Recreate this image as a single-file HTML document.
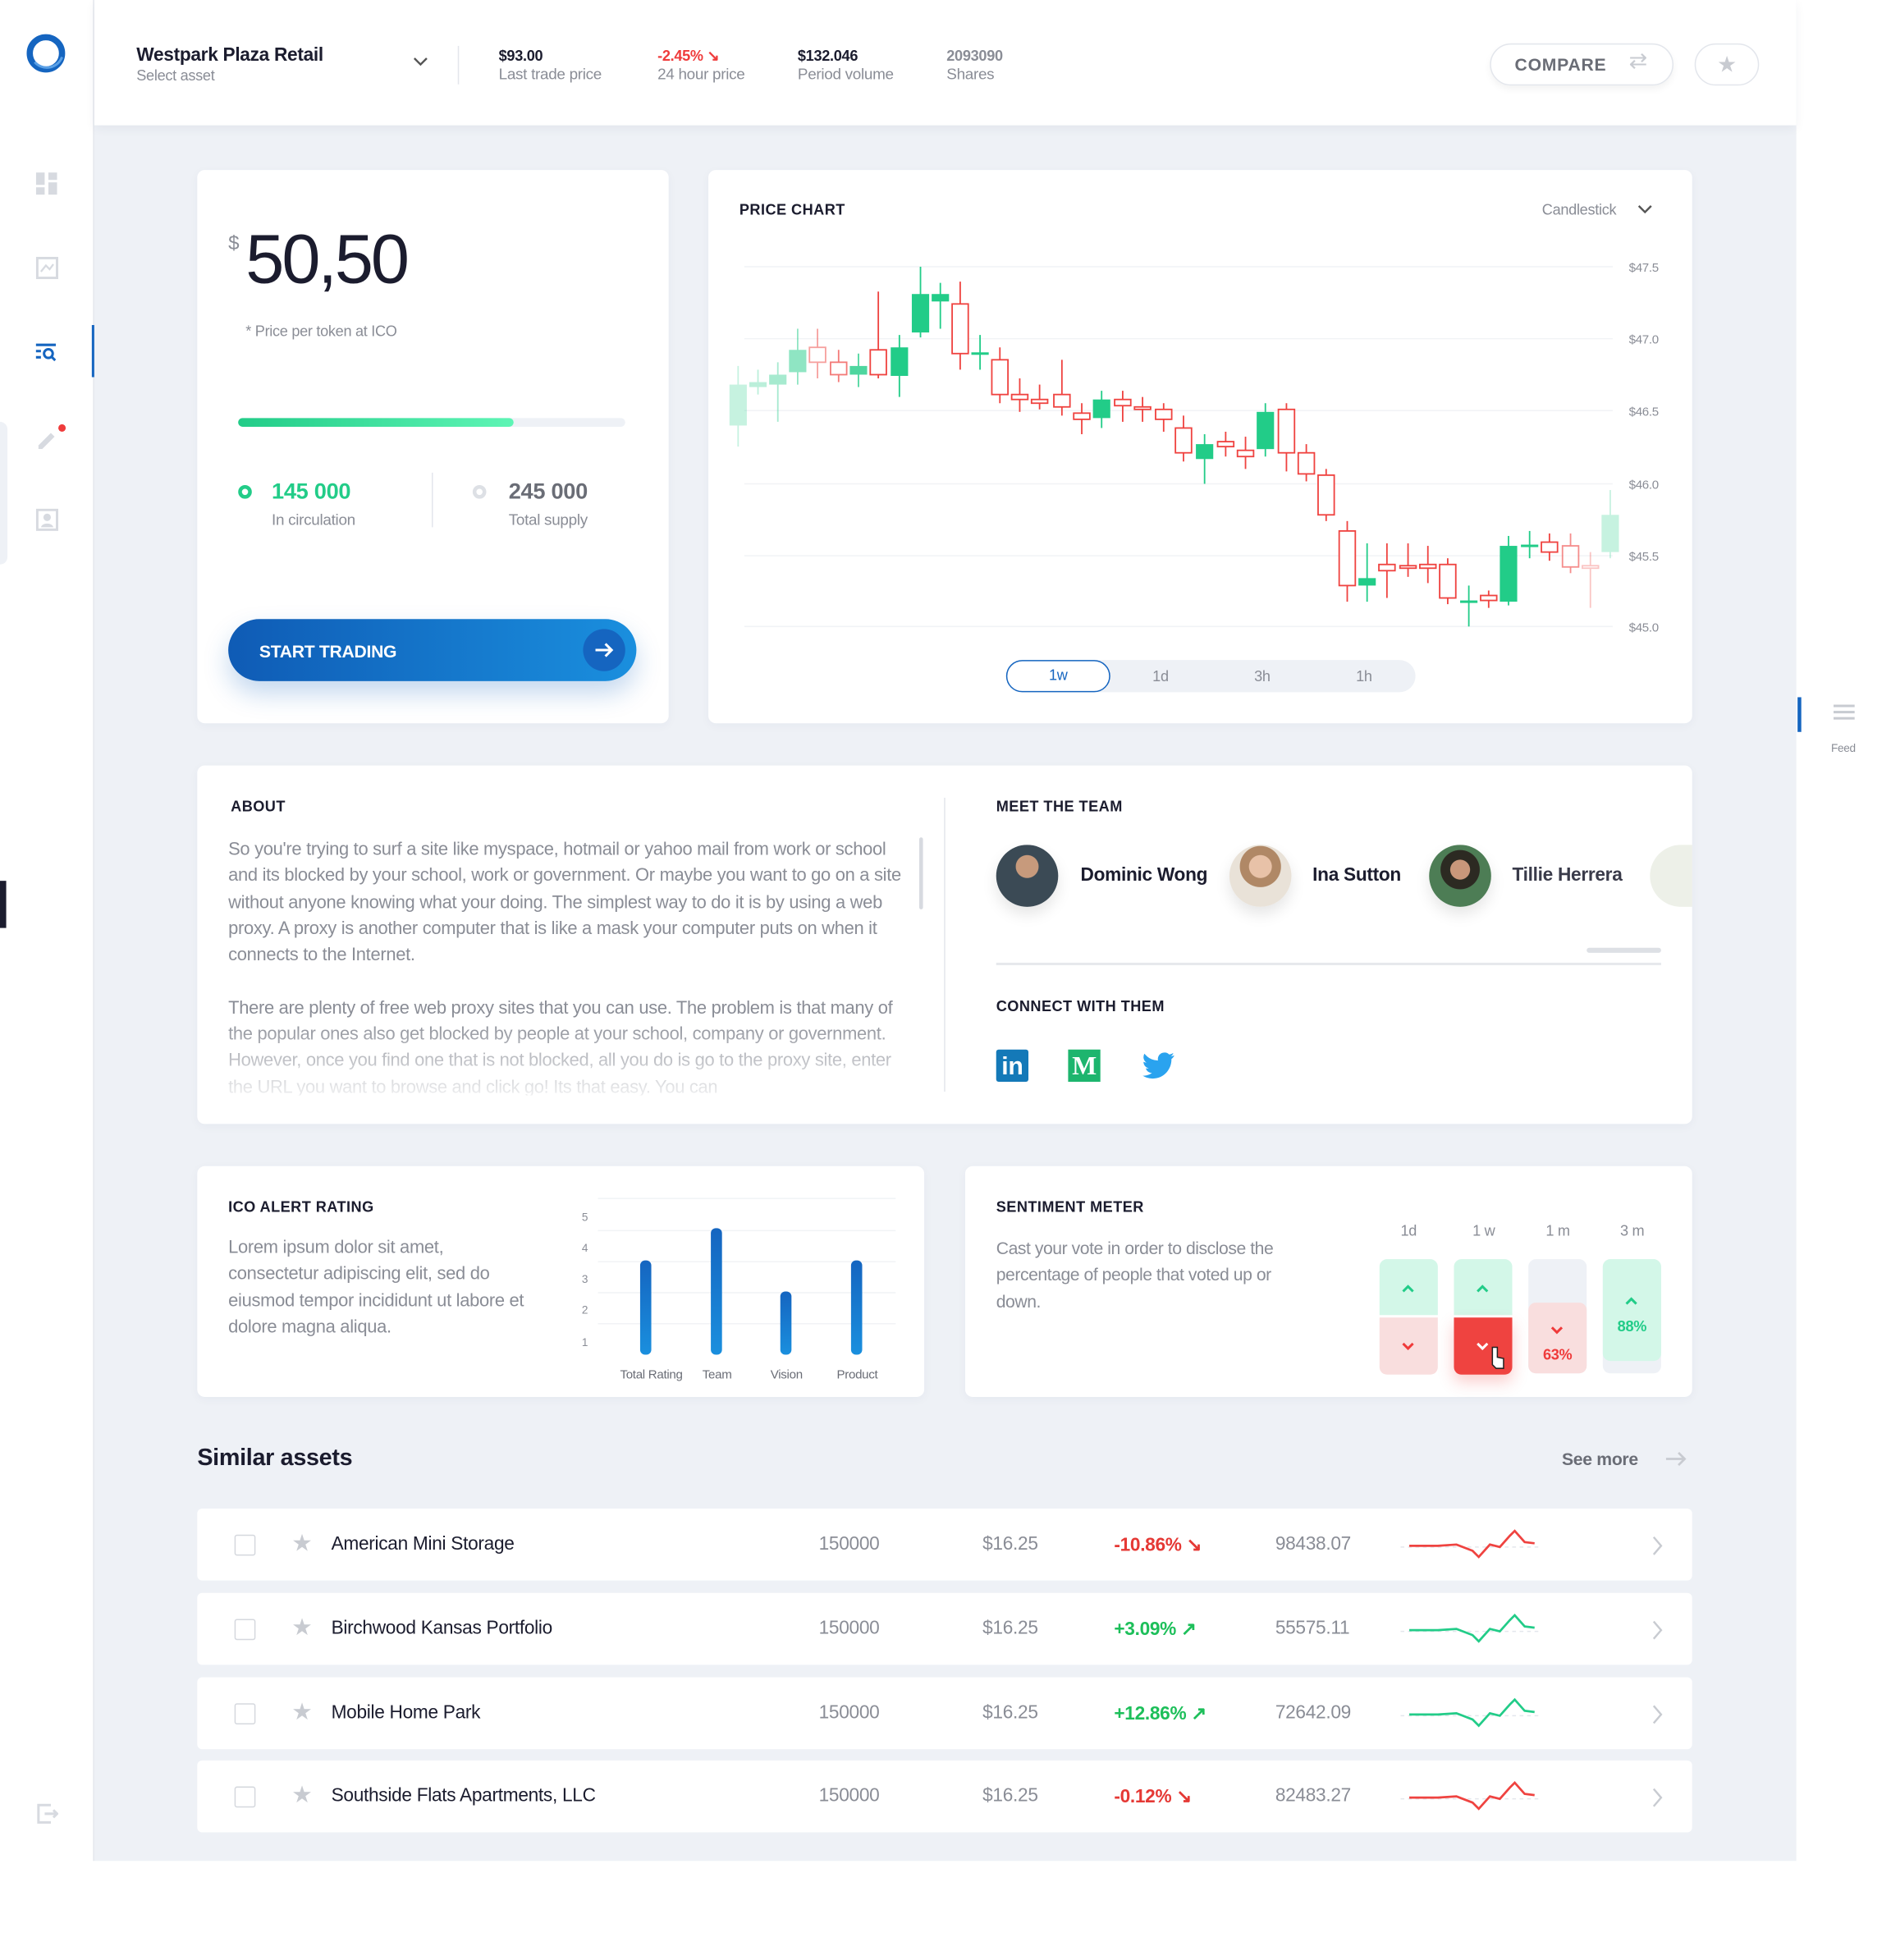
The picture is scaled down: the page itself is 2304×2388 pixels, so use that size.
<!DOCTYPE html>
<html><head><meta charset="utf-8"><style>
*{box-sizing:border-box;margin:0;padding:0}
html,body{width:2304px;height:2370px;overflow:hidden;background:#fff}
#w{position:absolute;left:0;top:0;width:1536px;height:1580px;transform:scale(1.5115);transform-origin:0 0;font-family:"Liberation Sans Narrow","Liberation Sans",sans-serif;color:#1b1c2e;letter-spacing:-0.2px}
.a{position:absolute}
.card{position:absolute;background:#fff;border-radius:6px;box-shadow:0 2px 8px rgba(30,50,90,.04)}
.h{font-weight:bold;font-size:12px;letter-spacing:.3px;color:#1b1c2e}
.g{color:#8a8d96}
.row{position:absolute;left:159px;width:1205px;height:58px;background:#fff;border-radius:4px;font-size:15px;color:#1b1c2e}
.row span{position:absolute;top:20px}
.cb{position:absolute;left:30px;top:21px;width:17px;height:17px;border:1.5px solid #d5d8de;border-radius:2px}
</style></head><body><div id="w">
<div class="a" style="left:76px;top:0;width:1372px;height:1500px;background:#eef1f6"></div>
<div class="a" style="left:0;top:0;width:76px;height:1500px;background:#fff;border-right:1px solid #e3e6ec"></div>
<div class="a" style="left:0;top:340px;width:6px;height:115px;background:#eef1f6;border-radius:0 6px 6px 0"></div>
<div class="a" style="left:0;top:710px;width:5px;height:38px;background:#1b1c2e"></div>
<svg class="a" style="left:20px;top:26px" width="34" height="34" viewBox="0 0 34 34"><circle cx="17" cy="17" r="13" fill="none" stroke="#1565c0" stroke-width="5"/><circle cx="18" cy="16" r="9" fill="#fff"/><path d="M8 24 A13 13 0 0 0 30 20" fill="none" stroke="#5aa0e6" stroke-width="2"/></svg>
<svg class="a" style="left:29px;top:139px" width="18" height="18"><rect x="0" y="0" width="7" height="10" fill="#d7dae0"/><rect x="10" y="0" width="7" height="6" fill="#d7dae0"/><rect x="0" y="12" width="7" height="6" fill="#d7dae0"/><rect x="10" y="8" width="7" height="10" fill="#d7dae0"/></svg>
<svg class="a" style="left:29px;top:207px" width="18" height="18"><rect x="1" y="1" width="16" height="16" fill="none" stroke="#d7dae0" stroke-width="2"/><path d="M4 12l4-5 3 3 3-4" fill="none" stroke="#d7dae0" stroke-width="1.5"/></svg>
<svg class="a" style="left:28px;top:276px" width="20" height="16"><path d="M1 2h16M1 7h4M1 12h4" stroke="#1565c0" stroke-width="2"/><circle cx="11" cy="9" r="3.5" fill="none" stroke="#1565c0" stroke-width="2"/><path d="M13.5 11.5l3 3" stroke="#1565c0" stroke-width="2"/></svg>
<div class="a" style="left:74px;top:262px;width:2px;height:42px;background:#1565c0"></div>
<svg class="a" style="left:28px;top:340px" width="26" height="22"><path d="M3 19l10-10 3 3-10 10H3z" fill="#d7dae0"/><circle cx="22" cy="5" r="3" fill="#ef3b3b"/></svg>
<svg class="a" style="left:29px;top:410px" width="18" height="18"><rect x="1" y="1" width="16" height="16" fill="none" stroke="#d7dae0" stroke-width="2"/><circle cx="9" cy="7" r="3" fill="#d7dae0"/><path d="M4 15c1-4 9-4 10 0z" fill="#d7dae0"/></svg>
<svg class="a" style="left:29px;top:1453px" width="18" height="18"><path d="M12 2H2v14h10" fill="none" stroke="#d7dae0" stroke-width="2"/><path d="M7 9h10M14 6l3 3-3 3" fill="none" stroke="#d7dae0" stroke-width="2"/></svg>
<div class="a" style="left:76px;top:0;width:1372px;height:101px;background:#fff;box-shadow:0 3px 8px rgba(30,50,90,.06)"></div>
<div class="a" style="left:110px;top:36px;font-size:15px;font-weight:bold">Westpark Plaza Retail</div>
<div class="a g" style="left:110px;top:54px;font-size:12px">Select asset</div>
<svg class="a" style="left:333px;top:46px" width="12" height="8"><path d="M1 1l5 5 5-5" fill="none" stroke="#555" stroke-width="1.6"/></svg>
<div class="a" style="left:369px;top:37px;width:1px;height:31px;background:#e3e6ec"></div>
<div class="a" style="left:402px;top:38px;font-size:12px;font-weight:bold">$93.00</div>
<div class="a g" style="left:402px;top:53px;font-size:12.5px">Last trade price</div>
<div class="a" style="left:530px;top:38px;font-size:12px;font-weight:bold;color:#ef3b3b">-2.45% ↘</div>
<div class="a g" style="left:530px;top:53px;font-size:12.5px">24 hour price</div>
<div class="a" style="left:643px;top:38px;font-size:12px;font-weight:bold">$132.046</div>
<div class="a g" style="left:643px;top:53px;font-size:12.5px">Period volume</div>
<div class="a g" style="left:763px;top:38px;font-size:12px;font-weight:bold">2093090</div>
<div class="a g" style="left:763px;top:53px;font-size:12.5px">Shares</div>
<div class="a" style="left:1201px;top:35px;width:148px;height:34px;border:1px solid #e3e6ec;border-radius:17px;box-shadow:0 3px 6px rgba(0,0,0,.05)"></div>
<div class="a" style="left:1221px;top:44px;font-size:14px;font-weight:bold;color:#6a6d76;letter-spacing:.5px">COMPARE</div>
<div class="a" style="left:1313px;top:39px;font-size:18px;color:#c8cbd1">⇄</div>
<div class="a" style="left:1366px;top:35px;width:52px;height:34px;border:1px solid #e3e6ec;border-radius:17px;text-align:center;font-size:18px;line-height:32px;color:#c8cbd1">★</div>
<div class="a" style="left:1449px;top:562px;width:3px;height:28px;background:#1565c0"></div>
<div class="a" style="left:1478px;top:568px;width:17px;height:2px;background:#c8cbd1;box-shadow:0 5px 0 #c8cbd1,0 10px 0 #c8cbd1"></div>
<div class="a g" style="left:1476px;top:598px;font-size:9px">Feed</div>
<div class="card" style="left:159px;top:137px;width:380px;height:446px"></div>
<div class="a" style="left:184px;top:188px;font-size:16px;color:#8a8d96">$</div>
<div class="a" style="left:198px;top:176px;font-size:56px;color:#1b1c2e;letter-spacing:-2px">50,50</div>
<div class="a g" style="left:198px;top:260px;font-size:12px">* Price per token at ICO</div>
<div class="a" style="left:192px;top:337px;width:312px;height:7px;background:#eef1f6;border-radius:4px"></div>
<div class="a" style="left:192px;top:337px;width:222px;height:7px;background:linear-gradient(90deg,#22cc88,#5ef5b5);border-radius:4px"></div>
<div class="a" style="left:192px;top:391px;width:11px;height:11px;border:3px solid #22cc88;border-radius:50%"></div>
<div class="a" style="left:219px;top:386px;font-size:18px;font-weight:bold;color:#22cc88">145 000</div>
<div class="a g" style="left:219px;top:412px;font-size:12.5px">In circulation</div>
<div class="a" style="left:348px;top:381px;width:1px;height:44px;background:#e3e6ec"></div>
<div class="a" style="left:381px;top:391px;width:11px;height:11px;border:3px solid #dde0e5;border-radius:50%"></div>
<div class="a" style="left:410px;top:386px;font-size:18px;font-weight:bold;color:#6a6d76">245 000</div>
<div class="a g" style="left:410px;top:412px;font-size:12.5px">Total supply</div>
<div class="a" style="left:184px;top:499px;width:329px;height:50px;border-radius:25px;background:linear-gradient(90deg,#0f5bb5,#1a8fde);box-shadow:0 10px 20px rgba(21,101,192,.25)"></div>
<div class="a" style="left:209px;top:517px;font-size:14px;font-weight:bold;color:#fff">START TRADING</div>
<div class="a" style="left:470px;top:507px;width:34px;height:34px;border-radius:50%;background:#1565c0"></div>
<svg class="a" style="left:478px;top:515px" width="18" height="18"><path d="M2 9h13M10 4l5 5-5 5" fill="none" stroke="#fff" stroke-width="2"/></svg>
<div class="card" style="left:571px;top:137px;width:793px;height:446px"></div>
<div class="a h" style="left:596px;top:162px">PRICE CHART</div>
<div class="a g" style="left:1243px;top:162px;font-size:12px">Candlestick</div>
<svg class="a" style="left:1320px;top:165px" width="12" height="8"><path d="M1 1l5 5 5-5" fill="none" stroke="#555" stroke-width="1.6"/></svg>
<svg class="a" style="left:0;top:0" width="1536" height="600">
<g stroke="#f1f3f6" stroke-width="1"><line x1="600" y1="215" x2="1300" y2="215"/><line x1="600" y1="273" x2="1300" y2="273"/><line x1="600" y1="331" x2="1300" y2="331"/><line x1="600" y1="390" x2="1300" y2="390"/><line x1="600" y1="448" x2="1300" y2="448"/><line x1="600" y1="505" x2="1300" y2="505"/></g>
<g font-size="10" fill="#8a8d96" font-family="Liberation Sans Narrow,Liberation Sans,sans-serif"><text x="1313" y="219">$47.5</text><text x="1313" y="277">$47.0</text><text x="1313" y="335">$46.5</text><text x="1313" y="394">$46.0</text><text x="1313" y="452">$45.5</text><text x="1313" y="509">$45.0</text></g>
<g id="cd"></g>
</svg>
<div class="a" style="left:811px;top:532px;width:330px;height:26px;background:#eef1f6;border-radius:13px"></div>
<div class="a" style="left:811px;top:532px;width:84px;height:26px;background:#fff;border:1.5px solid #1565c0;border-radius:13px;text-align:center;line-height:23px;font-size:12px;color:#1565c0">1w</div>
<div class="a g" style="left:929px;top:538px;font-size:12px">1d</div>
<div class="a g" style="left:1011px;top:538px;font-size:12px">3h</div>
<div class="a g" style="left:1093px;top:538px;font-size:12px">1h</div>
<div class="card" style="left:159px;top:617px;width:1205px;height:289px"></div>
<div class="a h" style="left:186px;top:643px">ABOUT</div>
<div class="a g" style="left:184px;top:675px;width:545px;height:208px;overflow:hidden;font-size:14.5px;letter-spacing:-0.2px;line-height:21.3px;-webkit-mask-image:linear-gradient(180deg,#000 70%,rgba(0,0,0,.15))">So you're trying to surf a site like myspace, hotmail or yahoo mail from work or school and its blocked by your school, work or government. Or maybe you want to go on a site without anyone knowing what your doing. The simplest way to do it is by using a web proxy. A proxy is another computer that is like a mask your computer puts on when it connects to the Internet.<br><br>There are plenty of free web proxy sites that you can use. The problem is that many of the popular ones also get blocked by people at your school, company or government. However, once you find one that is not blocked, all you do is go to the proxy site, enter the URL you want to browse and click go! Its that easy. You can</div>
<div class="a" style="left:741px;top:675px;width:3px;height:58px;background:#d7dae0;border-radius:2px"></div>
<div class="a" style="left:761px;top:643px;width:1px;height:237px;background:#e3e6ec"></div>
<div class="a h" style="left:803px;top:643px">MEET THE TEAM</div>
<div class="a" style="left:803px;top:681px;width:50px;height:50px;border-radius:50%;background:radial-gradient(circle at 50% 35%,#c79a7c 0 22%,#3b4a55 23% 100%);box-shadow:0 6px 12px rgba(0,0,0,.1)"></div>
<div class="a" style="left:871px;top:697px;font-size:15px;font-weight:bold">Dominic Wong</div>
<div class="a" style="left:991px;top:681px;width:50px;height:50px;border-radius:50%;background:radial-gradient(circle at 50% 35%,#e8c2a8 0 22%,#b08866 23% 40%,#e9e2d8 41%);box-shadow:0 6px 12px rgba(0,0,0,.1)"></div>
<div class="a" style="left:1058px;top:697px;font-size:15px;font-weight:bold">Ina Sutton</div>
<div class="a" style="left:1152px;top:681px;width:50px;height:50px;border-radius:50%;background:radial-gradient(circle at 50% 40%,#c9977a 0 20%,#2c2a22 21% 40%,#4d7d55 41%);box-shadow:0 6px 12px rgba(0,0,0,.1)"></div>
<div class="a" style="left:1219px;top:697px;font-size:15px;font-weight:bold;color:#3a3b4a">Tillie Herrera</div>
<div class="a" style="left:1330px;top:681px;width:34px;height:50px;border-radius:25px 0 0 25px;background:#e9ece2;opacity:.8"></div>
<div class="a" style="left:1279px;top:764px;width:60px;height:4px;background:#dde0e5;border-radius:2px"></div>
<div class="a" style="left:803px;top:776px;width:536px;height:2px;background:#e6e8ec"></div>
<div class="a h" style="left:803px;top:804px">CONNECT WITH THEM</div>
<div class="a" style="left:803px;top:846px;width:26px;height:26px;background:#1479b8;border-radius:2px;color:#fff;font-weight:bold;font-size:20px;line-height:28px;text-align:center;font-family:'Liberation Sans',sans-serif">in</div>
<div class="a" style="left:861px;top:846px;width:26px;height:26px;background:#1db56e;color:#fff;font-weight:bold;font-size:21px;line-height:27px;text-align:center;font-family:'Liberation Serif',serif">M</div>
<svg class="a" style="left:921px;top:848px" width="26" height="22" viewBox="0 0 24 20"><path d="M23.6 2.4c-.9.4-1.8.6-2.8.8 1-.6 1.8-1.6 2.1-2.7-.9.6-2 1-3.1 1.2A4.9 4.9 0 0 0 11.5 6.2 13.9 13.9 0 0 1 1.4 1.1a4.9 4.9 0 0 0 1.5 6.6c-.8 0-1.600-.3-2.2-.6 0 2.4 1.7 4.4 3.9 4.8-.7.2-1.5.2-2.2.1.6 2 2.4 3.4 4.6 3.4A9.9 9.9 0 0 1 0 17.4 14 14 0 0 0 7.5 19.6c9 0 14-7.5 14-14v-.6c1-.7 1.8-1.6 2.1-2.6z" fill="#2aa3ef"/></svg>
<div class="card" style="left:159px;top:940px;width:586px;height:186px"></div>
<div class="a h" style="left:184px;top:966px">ICO ALERT RATING</div>
<div class="a g" style="left:184px;top:996px;width:260px;font-size:14.5px;letter-spacing:-0.2px;line-height:21.3px">Lorem ipsum dolor sit amet,<br>consectetur adipiscing elit, sed do eiusmod tempor incididunt ut labore et dolore magna aliqua.</div>
<svg class="a" style="left:460px;top:960px" width="280" height="160" font-family="Liberation Sans Narrow,Liberation Sans,sans-serif">
<g stroke="#f1f3f6"><line x1="22" y1="6" x2="262" y2="6"/><line x1="22" y1="32" x2="262" y2="32"/><line x1="22" y1="57" x2="262" y2="57"/><line x1="22" y1="82" x2="262" y2="82"/><line x1="22" y1="107" x2="262" y2="107"/></g>
<g font-size="9" fill="#8a8d96"><text x="9" y="24">5</text><text x="9" y="49">4</text><text x="9" y="74">3</text><text x="9" y="99">2</text><text x="9" y="125">1</text></g>
<defs><linearGradient id="bg" x1="0" y1="0" x2="0" y2="1"><stop offset="0" stop-color="#1565c0"/><stop offset="1" stop-color="#1a8fde"/></linearGradient></defs>
<rect x="56" y="56" width="9" height="76" rx="4" fill="url(#bg)"/><rect x="113" y="30" width="9" height="102" rx="4" fill="url(#bg)"/><rect x="169" y="81" width="9" height="51" rx="4" fill="url(#bg)"/><rect x="226" y="56" width="9" height="76" rx="4" fill="url(#bg)"/>
<g font-size="10" fill="#6a6d76" text-anchor="middle"><text x="65" y="151">Total Rating</text><text x="118" y="151">Team</text><text x="174" y="151">Vision</text><text x="231" y="151">Product</text></g>
</svg>
<div class="card" style="left:778px;top:940px;width:586px;height:186px"></div>
<div class="a h" style="left:803px;top:966px">SENTIMENT METER</div>
<div class="a g" style="left:803px;top:996px;width:255px;font-size:14px;letter-spacing:-0.3px;line-height:21.3px">Cast your vote in order to disclose the percentage of people that voted up or down.</div>
<div class="a g" style="left:1129px;top:985px;font-size:12px">1d</div>
<div class="a g" style="left:1187px;top:985px;font-size:12px">1 w</div>
<div class="a g" style="left:1246px;top:985px;font-size:12px">1 m</div>
<div class="a g" style="left:1306px;top:985px;font-size:12px">3 m</div>
<div class="a" style="left:1112px;top:1015px;width:47px;height:45px;background:#d3f7e8;border-radius:6px 6px 0 0"></div>
<div class="a" style="left:1112px;top:1062px;width:47px;height:46px;background:#f9dede;border-radius:0 0 6px 6px"></div>
<div class="a" style="left:1172px;top:1015px;width:47px;height:45px;background:#d3f7e8;border-radius:6px 6px 0 0"></div>
<div class="a" style="left:1172px;top:1062px;width:47px;height:46px;background:#ef4340;border-radius:0 0 6px 6px;box-shadow:0 6px 12px rgba(239,67,64,.25)"></div>
<div class="a" style="left:1232px;top:1015px;width:47px;height:92px;background:#eef1f6;border-radius:6px"></div>
<div class="a" style="left:1232px;top:1050px;width:47px;height:57px;background:#f9dede;border-radius:6px"></div>
<div class="a" style="left:1232px;top:1085px;width:47px;text-align:center;font-size:12px;font-weight:bold;color:#ef3b3b">63%</div>
<div class="a" style="left:1292px;top:1015px;width:47px;height:92px;background:#eef1f6;border-radius:6px"></div>
<div class="a" style="left:1292px;top:1015px;width:47px;height:82px;background:#d3f7e8;border-radius:6px"></div>
<div class="a" style="left:1292px;top:1062px;width:47px;text-align:center;font-size:12px;font-weight:bold;color:#22cc88">88%</div>
<svg class="a" style="left:0;top:0" width="1536" height="1200" fill="none" stroke-width="2">
<path d="M1131 1041l4-4 4 4" stroke="#22cc88"/><path d="M1131 1083l4 4 4-4" stroke="#ef3b3b"/>
<path d="M1191 1041l4-4 4 4" stroke="#22cc88"/><path d="M1191 1083l4 4 4-4" stroke="#fff"/>
<path d="M1251 1070l4 4 4-4" stroke="#ef3b3b"/><path d="M1311 1051l4-4 4 4" stroke="#22cc88"/>
<path d="M1203 1086v14l3 3h6v-8l-5-1v-8z" fill="#fff" stroke="#222" stroke-width="1"/>
</svg>
<div class="a" style="left:159px;top:1165px;font-size:19px;font-weight:bold">Similar assets</div>
<div class="a" style="left:1259px;top:1168px;font-size:14px;font-weight:bold;color:#6a6d76">See more</div>
<svg class="a" style="left:1342px;top:1169px" width="18" height="14"><path d="M1 7h15M11 2l5 5-5 5" fill="none" stroke="#c8cbd1" stroke-width="1.8"/></svg>
<div id="rows"></div>
</div>
<script>
var C=[[595,310,343,295,360,'g',.25],[611,308,312,298,318,'g',.3],[627,302,310,292,340,'g',.4],[643,282,300,265,310,'g',.5],[659,280,292,265,305,'r',.5],[676,292,302,282,308,'r',.7],[692,295,302,285,312,'g',.8],[708,282,302,235,305,'r',1],[725,280,303,270,320,'g',1],[742,237,268,215,272,'g',1],[758,237,243,228,265,'g',1],[774,245,285,227,298,'r',1],[790,284,286,270,298,'g',1],[806,290,318,280,325,'r',1],[822,318,322,305,332,'r',1],[838,322,325,310,330,'r',1],[856,318,328,290,335,'r',1],[872,333,338,325,350,'r',1],[888,322,337,315,345,'g',1],[905,322,327,315,340,'r',1],[921,328,330,320,340,'r',1],[938,330,338,325,348,'r',1],[954,345,365,335,372,'r',1],[971,358,370,350,390,'g',1],[988,356,360,348,368,'r',1],[1004,363,368,352,378,'r',1],[1020,332,362,325,368,'g',1],[1037,330,365,325,380,'r',1],[1053,365,382,358,388,'r',1],[1069,383,415,378,420,'r',1],[1086,428,472,420,485,'r',1],[1102,466,472,438,485,'g',1],[1118,455,460,438,482,'r',1],[1135,456,458,438,465,'r',1],[1151,455,458,440,470,'r',1],[1167,455,482,450,487,'r',1],[1184,484,486,472,505,'g',1],[1200,480,484,476,490,'r',1],[1216,440,485,432,488,'g',1],[1233,439,441,428,450,'g',1],[1249,437,445,430,452,'r',1],[1266,440,457,430,462,'r',.6],[1282,456,458,445,490,'r',.3],[1298,415,445,395,450,'g',.25]];
var s='';C.forEach(function(c){var col=c[5]=='g'?'#22cc88':'#ef4340';s+='<g opacity="'+c[6]+'"><line x1="'+c[0]+'" y1="'+c[3]+'" x2="'+c[0]+'" y2="'+c[4]+'" stroke="'+col+'" stroke-width="1.2"/>';var h=Math.max(c[2]-c[1],1.5);if(c[5]=='g')s+='<rect x="'+(c[0]-7)+'" y="'+c[1]+'" width="14" height="'+h+'" fill="'+col+'"/>';else s+='<rect x="'+(c[0]-6.5)+'" y="'+c[1]+'" width="13" height="'+h+'" fill="#fff" stroke="'+col+'" stroke-width="1.2"/>';s+='</g>';});
document.getElementById('cd').innerHTML=s;
var R=[['American Mini Storage','-10.86% ↘','98438.07',0,1216],['Birchwood Kansas Portfolio','+3.09% ↗','55575.11',1,1284],['Mobile Home Park','+12.86% ↗','72642.09',1,1352],['Southside Flats Apartments, LLC','-0.12% ↘','82483.27',0,1419]];
var h='';R.forEach(function(r){var col=r[3]?'#22cc88':'#ef4340';var pc=r[3]?'#1dbf5a':'#e53935';h+='<div class="row" style="top:'+r[4]+'px"><div class="cb"></div><span style="left:76px;top:17px;color:#c8cbd1;font-size:19px">★</span><span style="left:108px">'+r[0]+'</span><span style="left:501px;color:#8a8d96">150000</span><span style="left:633px;color:#8a8d96">$16.25</span><span style="left:'+(r[1].length>9?733:739)+'px;font-weight:bold;color:'+pc+'">'+r[1]+'</span><span style="left:869px;color:#8a8d96">'+r[2]+'</span><svg style="position:absolute;left:970px;top:12px" width="115" height="34"><line x1="0" y1="19" x2="112" y2="19" stroke="#e3e6ec" stroke-dasharray="3 3"/><path d="M7 18 L30 18 L45 17 L58 22 L63 27 L72 17 L80 19 L88 10 L92 6 L100 15 L108 16" fill="none" stroke="'+col+'" stroke-width="1.8"/></svg><svg style="position:absolute;left:1172px;top:22px" width="10" height="16"><path d="M2 1l6 7-6 7" fill="none" stroke="#c8cbd1" stroke-width="1.6"/></svg></div>';});
document.getElementById('rows').innerHTML=h;
</script>
</body></html>
